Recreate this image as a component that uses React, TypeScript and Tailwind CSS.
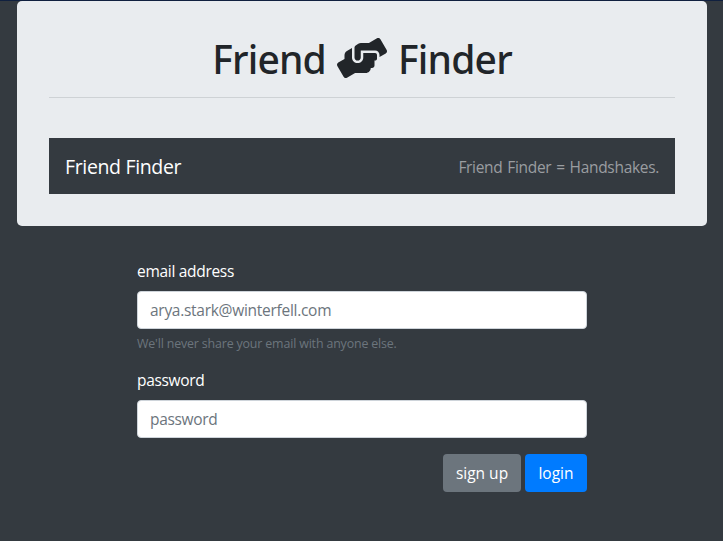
import { FaHandsHelping } from "react-icons/fa";

const inputClass =
  "block h-[38px] w-full rounded border border-[#ced4da] bg-white px-3 text-[15.5px] leading-6 text-[#495057] outline-none placeholder:text-[#6c757d] placeholder:opacity-100";

export default function App() {
  return (
    <div className="h-[541px] overflow-hidden border-t border-[#10203f] bg-[#343a40] font-['Open_Sans','Noto_Sans',sans-serif] text-[15.5px] leading-6 text-white">
      <header className="ml-[17px] h-[225px] w-[690px] rounded-[5px] bg-[#e9ecef] p-8">
        <h1 className="flex h-12 items-center justify-center font-['Noto_Sans',sans-serif] text-[39px] leading-[48px] font-medium tracking-[-0.8px] text-[#212529]">
          <span className="mt-[3px] whitespace-nowrap">Friend</span>
          <FaHandsHelping className="mx-[11px] mt-[2px] h-10 w-[50px] shrink-0" />
          <span className="mt-[3px] whitespace-nowrap">Finder</span>
        </h1>
        <hr className="mt-4 border-t border-[#ced2d5]" />
        <nav className="mt-10 flex h-14 items-center justify-between bg-[#343a40] px-4">
          <a className="pt-[2px] text-[19.5px] leading-[30px] tracking-[-0.35px]">Friend Finder</a>
          <span className="pt-px tracking-[-0.31px] [word-spacing:1.1px] text-[#9a9da0]">Friend Finder = Handshakes.</span>
        </nav>
      </header>

      <form className="ml-[137px] w-[450px] pt-[33px]">
        <div className="mb-4">
          <label htmlFor="email" className="mb-2 block tracking-[-0.3px]">
            email address
          </label>
          <input id="email" type="email" placeholder="arya.stark@winterfell.com" className={`${inputClass} tracking-[-0.28px]`} />
          <small className="mt-1 block h-[19px] pt-px text-[12.4px] leading-[19px] tracking-[-0.15px] text-[#6c757d]">
            We'll never share your email with anyone else.
          </small>
        </div>
        <div className="mb-4">
          <label htmlFor="password" className="mb-2 block tracking-[-0.32px]">
            password
          </label>
          <input id="password" type="password" placeholder="password" className={`${inputClass} tracking-[-0.32px]`} />
        </div>
        <div className="flex justify-end gap-1">
          <button type="button" className="h-[38px] w-[78px] rounded bg-[#6c757d]">
            sign up
          </button>
          <button type="button" className="h-[38px] w-[62px] rounded bg-[#007bff]">
            login
          </button>
        </div>
      </form>
    </div>
  );
}
